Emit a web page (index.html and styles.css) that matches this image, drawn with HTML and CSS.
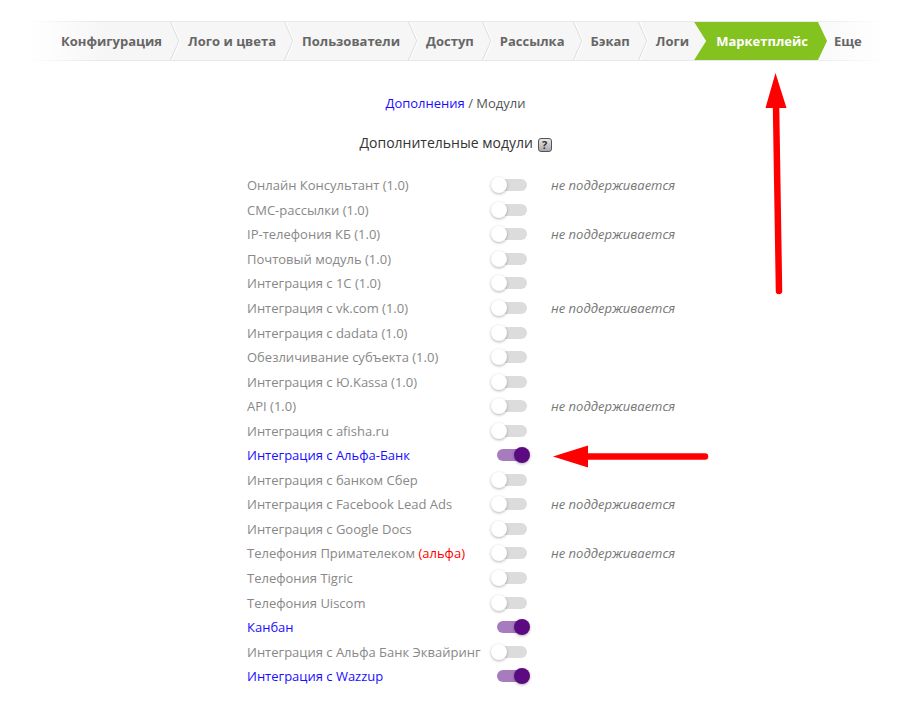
FILE: index.html
```html
<!DOCTYPE html>
<html lang="ru">
<head>
    <meta charset="UTF-8">
    <meta name="viewport" content="width=device-width, initial-scale=1.0">
    <title>Маркетплейс — Модули</title>
    <link rel="stylesheet" href="styles.css">
</head>
<body>
    <nav class="tabs">
        <a class="tab">Конфигурация</a><span class="sep"></span>
        <a class="tab">Лого и цвета</a><span class="sep"></span>
        <a class="tab">Пользователи</a><span class="sep"></span>
        <a class="tab">Доступ</a><span class="sep"></span>
        <a class="tab">Рассылка</a><span class="sep"></span>
        <a class="tab">Бэкап</a><span class="sep"></span>
        <a class="tab">Логи</a>
        <a class="tab active">Маркетплейс</a>
        <a class="tab">Еще</a>
    </nav>

    <div class="crumbs"><a href="#">Дополнения</a> / Модули</div>

    <h2 class="title">Дополнительные модули <span class="help">?</span></h2>

    <div class="modules">
        <div class="row"><span class="name">Онлайн Консультант (1.0)</span><span class="switch"></span><span class="note">не поддерживается</span></div>
        <div class="row"><span class="name">СМС-рассылки (1.0)</span><span class="switch"></span></div>
        <div class="row"><span class="name">IP-телефония КБ (1.0)</span><span class="switch"></span><span class="note">не поддерживается</span></div>
        <div class="row"><span class="name">Почтовый модуль (1.0)</span><span class="switch"></span></div>
        <div class="row"><span class="name">Интеграция с 1С (1.0)</span><span class="switch"></span></div>
        <div class="row"><span class="name">Интеграция с vk.com (1.0)</span><span class="switch"></span><span class="note">не поддерживается</span></div>
        <div class="row"><span class="name">Интеграция с dadata (1.0)</span><span class="switch"></span></div>
        <div class="row"><span class="name">Обезличивание субъекта (1.0)</span><span class="switch"></span></div>
        <div class="row"><span class="name">Интеграция с Ю.Kassa (1.0)</span><span class="switch"></span></div>
        <div class="row"><span class="name">API (1.0)</span><span class="switch"></span><span class="note">не поддерживается</span></div>
        <div class="row"><span class="name">Интеграция с afisha.ru</span><span class="switch"></span></div>
        <div class="row on"><span class="name">Интеграция с Альфа-Банк</span><span class="switch"></span></div>
        <div class="row"><span class="name">Интеграция с банком Сбер</span><span class="switch"></span></div>
        <div class="row"><span class="name">Интеграция с Facebook Lead Ads</span><span class="switch"></span><span class="note">не поддерживается</span></div>
        <div class="row"><span class="name">Интеграция с Google Docs</span><span class="switch"></span></div>
        <div class="row"><span class="name">Телефония Примателеком <span class="alpha">(альфа)</span></span><span class="switch"></span><span class="note">не поддерживается</span></div>
        <div class="row"><span class="name">Телефония Tigric</span><span class="switch"></span></div>
        <div class="row"><span class="name">Телефония Uiscom</span><span class="switch"></span></div>
        <div class="row on"><span class="name">Канбан</span><span class="switch"></span></div>
        <div class="row"><span class="name">Интеграция с Альфа Банк Эквайринг</span><span class="switch"></span></div>
        <div class="row on"><span class="name">Интеграция с Wazzup</span><span class="switch"></span></div>
    </div>

    <!-- annotation arrows -->
    <svg class="marks" width="911" height="717" viewBox="0 0 911 717">
        <line x1="779" y1="291" x2="776" y2="104" stroke="#ff0000" stroke-width="6.5" stroke-linecap="round"/>
        <polygon points="775.5,73 765.5,108 786.5,108" fill="#ff0000"/>
        <line x1="705" y1="456.5" x2="585" y2="456.5" stroke="#ff0000" stroke-width="6.5" stroke-linecap="round"/>
        <polygon points="553,456.5 588,445.5 588,467.5" fill="#ff0000"/>
    </svg>
</body>
</html>
```

FILE: styles.css
```css
body {
    margin: 0;
    padding: 0;
    background-color: #fff;
    font-family: "Open Sans", "Liberation Sans", sans-serif;
    font-size: 13px;
    color: #555;
}

.tabs {
    display: flex;
    align-items: center;
    height: 38px;
    margin: 21px 26px 0 30px;
    padding-left: 23px;
    background: linear-gradient(to right, #fff, #f6f6f6 9%, #f6f6f6 88%, #fff);
    border-top: 1px solid #e8e8e8;
    border-bottom: 1px solid #e8e8e8;
    border-image: linear-gradient(to right, rgba(232,232,232,0), #e8e8e8 9%, #e8e8e8 90%, rgba(232,232,232,0)) 1;
}
.tab {
    flex-shrink: 0;
    display: flex;
    align-items: center;
    height: 100%;
    padding: 0 8px;
    font-size: 13px;
    font-weight: 700;
    color: #666;
    cursor: pointer;
    white-space: nowrap;
}
.sep {
    flex-shrink: 0;
    width: 10px;
    height: 100%;
    background: url("data:image/svg+xml,%3Csvg xmlns='http://www.w3.org/2000/svg' width='10' height='38'%3E%3Cpolyline points='0.5,0 9,19 0.5,38' fill='none' stroke='%23e0e0e0' stroke-width='1.2'/%3E%3Cpolyline points='1.8,0 10,19 1.8,38' fill='none' stroke='%23ffffff' stroke-width='1'/%3E%3C/svg%3E") no-repeat;
}
.tab.active {
    margin-left: -3px;
    padding: 0 19px 0 22px;
    background-color: #84c21f;
    color: #fff;
    clip-path: polygon(0 0, calc(100% - 9px) 0, 100% 50%, calc(100% - 9px) 100%, 0 100%, 12px 50%);
}
.tab.active + .tab {
    padding-left: 7px;
}

.crumbs {
    margin-top: 32px;
    line-height: 20px;
    text-align: center;
}
.crumbs a {
    color: #1a0dff;
    text-decoration: none;
}

.title {
    margin: 20px 0 0;
    line-height: 20px;
    font-size: 14px;
    font-weight: 400;
    color: #333;
    text-align: center;
}
.help {
    display: inline-block;
    width: 12px;
    height: 12px;
    margin-left: 1px;
    border: 1px solid #555;
    border-radius: 3px;
    background: linear-gradient(#e8e8e8, #a9a9a9);
    font-size: 11px;
    font-weight: 700;
    line-height: 12px;
    color: #333;
    vertical-align: -1px;
}

.modules {
    width: 417px;
    margin: 20px auto 0;
}
.row {
    display: flex;
    align-items: center;
    height: 24.55px;
    white-space: nowrap;
}
.name {
    flex-shrink: 0;
    width: 244px;
    color: #888;
}
.row.on .name {
    color: #1a0dff;
}
.alpha {
    color: #ff0000;
}
.note {
    margin-left: 24px;
    font-style: italic;
    color: #777;
}

.switch {
    flex-shrink: 0;
    position: relative;
    width: 30px;
    height: 12px;
    margin-left: 6px;
    border-radius: 6px;
    background-color: #dcdcdc;
}
.switch::after {
    content: "";
    position: absolute;
    top: -2px;
    left: -6px;
    width: 16px;
    height: 16px;
    border-radius: 50%;
    background-color: #fff;
    box-shadow: 0 1px 3px rgba(0, 0, 0, 0.3);
}
.row.on .switch {
    background-color: #a67cbf;
}
.row.on .switch::after {
    left: 17px;
    background-color: #5c0a82;
}

.marks {
    position: absolute;
    top: 0;
    left: 0;
    pointer-events: none;
}
```
